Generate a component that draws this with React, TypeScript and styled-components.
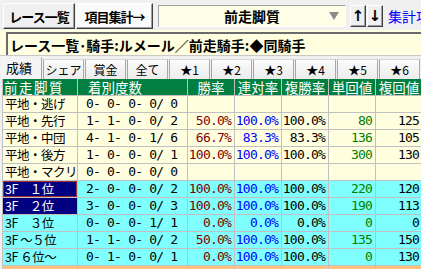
import React from 'react';
import styled, { createGlobalStyle } from 'styled-components';

const GlobalStyle = createGlobalStyle`
  html, body { margin: 0; padding: 0; background: #f0f0f0; }
  body {
    width: 421px;
    height: 269px;
    overflow: hidden;
    font-family: "Noto Sans CJK JP", sans-serif;
  }
`;

const Page = styled.div`
  width: 421px;
  height: 269px;
  overflow: hidden;
  background: #f0f0f0;
`;

const Toolbar = styled.div`
  display: flex;
  align-items: flex-start;
  height: 30px;
  padding: 3px 0 0 3px;
  box-sizing: border-box;
  white-space: nowrap;
  & > * { flex-shrink: 0; }
`;

const ToolButton = styled.div<{ $width: number; $light?: boolean }>`
  width: ${({ $width }) => $width}px;
  height: 26px;
  margin-right: 1px;
  box-sizing: border-box;
  display: flex;
  align-items: center;
  justify-content: center;
  background: ${({ $light }) => ($light ? '#fbfbfb' : '#f0f0f0')};
  border: 1px solid;
  border-color: #fff #404040 #404040 #fff;
  box-shadow: inset -1px -1px 0 #a0a0a0;
  font-size: 13px;
  font-weight: bold;
  letter-spacing: -1px;
  line-height: 1;
  color: #000;
`;

const Combo = styled.div`
  display: flex;
  align-items: center;
  width: 188px;
  height: 22px;
  margin: 2px 0 0 4px;
  box-sizing: border-box;
  background: #ffffe8;
  border: 1px solid;
  border-color: #a0a0a0 #fff #fff #a0a0a0;
`;

const ComboText = styled.span`
  flex: 1;
  text-align: center;
  padding-left: 20px;
  font-size: 14px;
  font-weight: bold;
  line-height: 1;
  color: #000;
`;

const ComboArrow = styled.span`
  width: 0;
  height: 0;
  margin: 0 6px 0 4px;
  border-left: 5px solid transparent;
  border-right: 5px solid transparent;
  border-top: 8px solid #8c8c8c;
`;

const ArrowButton = styled.div<{ $gap: number }>`
  width: 16px;
  height: 22px;
  margin: 2px 0 0 ${({ $gap }) => $gap}px;
  box-sizing: border-box;
  display: flex;
  align-items: center;
  justify-content: center;
  background: #f0f0f0;
  border: 1px solid;
  border-color: #fff #404040 #404040 #fff;
  box-shadow: inset -1px -1px 0 #a0a0a0;
  font-family: "DejaVu Sans", sans-serif;
  font-size: 15px;
  font-weight: bold;
  line-height: 1;
`;

const LinkText = styled.span`
  margin: 6px 0 0 5px;
  font-size: 14px;
  line-height: 1;
  color: #0000ff;
`;

const InfoBar = styled.div`
  height: 26px;
  padding: 2px 0 0 6px;
  box-sizing: border-box;
  background: #ffffe0;
  border-bottom: 1px solid #c8c8c8;
`;

const InfoBox = styled.div`
  height: 100%;
  box-sizing: border-box;
  padding: 2px 0 0 2px;
  border-top: 2px solid #6a6a6a;
  border-left: 2px solid #6a6a6a;
  font-size: 14px;
  font-weight: bold;
  line-height: 18px;
  color: #000;
  white-space: nowrap;
`;

const TabRow = styled.div`
  display: flex;
  align-items: flex-end;
  height: 23px;
  padding-left: 1px;
  gap: 1px;
`;

const Tab = styled.div<{ $active?: boolean }>`
  width: 41px;
  flex-shrink: 0;
  height: ${({ $active }) => ($active ? 22 : 20)}px;
  box-sizing: border-box;
  display: flex;
  align-items: ${({ $active }) => ($active ? 'flex-start' : 'center')};
  justify-content: ${({ $active }) => ($active ? 'flex-start' : 'center')};
  padding-left: ${({ $active }) => ($active ? 4 : 0)}px;
  padding-top: ${({ $active }) => ($active ? 2 : 1)}px;
  background: ${({ $active }) => ($active ? '#f4f4f4' : 'linear-gradient(#fbfbfb, #ececec)')};
  border-left: 1px solid ${({ $active }) => ($active ? '#f4f4f4' : '#a8a8a8')};
  border-right: 1px solid #a8a8a8;
  border-top: 1px solid ${({ $active }) => ($active ? '#f4f4f4' : '#d8d8d8')};
  font-size: ${({ $active }) => ($active ? 13 : 12)}px;
  line-height: 16px;
  color: #000;
  white-space: nowrap;
`;

const Grid = styled.div`
  display: grid;
  grid-template-columns: 75px 110px repeat(5, 47px);
  grid-auto-rows: 17px;
  margin-left: 2px;
  border-left: 1px solid #c0c0c0;
`;

const HeadCell = styled.div<{ $pad?: number; $spacing?: number; $left?: boolean }>`
  box-sizing: border-box;
  background: #007f40;
  color: #fff;
  border-right: 1px solid #c0c0c0;
  border-bottom: 1px solid #c0c0c0;
  padding-left: ${({ $pad }) => $pad ?? 0}px;
  text-align: ${({ $left }) => ($left ? 'left' : 'center')};
  font-size: 13.5px;
  letter-spacing: ${({ $spacing }) => $spacing ?? 0}px;
  line-height: 16px;
  white-space: nowrap;
`;

const LabelCell = styled.div<{ $bg: string; $selected?: boolean; $focus?: boolean }>`
  box-sizing: border-box;
  background: ${({ $bg, $selected }) => ($selected ? '#000080' : $bg)};
  color: ${({ $selected }) => ($selected ? '#fff' : '#000')};
  border-right: 1px solid #c0c0c0;
  border-bottom: 1px solid #c0c0c0;
  box-shadow: ${({ $focus }) => ($focus ? 'inset 0 0 0 1px #a03030' : 'none')};
  padding-left: 2px;
  font-size: 12.5px;
  letter-spacing: -0.5px;
  line-height: 16px;
  white-space: pre;
`;

const NumCell = styled.div<{ $bg: string; $color?: string; $left?: boolean }>`
  box-sizing: border-box;
  background: ${({ $bg }) => $bg};
  color: ${({ $color }) => $color ?? '#000'};
  border-right: 1px solid #c0c0c0;
  border-bottom: 1px solid #c0c0c0;
  padding: ${({ $left }) => ($left ? '0 0 0 8px' : '0 3px 0 0')};
  text-align: ${({ $left }) => ($left ? 'left' : 'right')};
  font-family: "DejaVu Sans Mono", monospace;
  font-size: 13px;
  letter-spacing: -0.8px;
  line-height: 16px;
  white-space: pre;
`;

type Row = {
  label: string;
  counts: string;
  values: string[];
  selected?: boolean;
  focus?: boolean;
};

const YELLOW = '#ffffe0';
const CYAN = '#80ffff';
const ORANGE = '#ffc080';

const valueColors = ['#800000', '#0000ff', '#000', '#008000', '#000'];

const flatRows: Row[] = [
  { label: '平地・逃げ', counts: '0- 0- 0- 0/ 0', values: ['', '', '', '', ''] },
  { label: '平地・先行', counts: '1- 1- 0- 0/ 2', values: ['50.0%', '100.0%', '100.0%', '80', '125'] },
  { label: '平地・中団', counts: '4- 1- 0- 1/ 6', values: ['66.7%', '83.3%', '83.3%', '136', '105'] },
  { label: '平地・後方', counts: '1- 0- 0- 0/ 1', values: ['100.0%', '100.0%', '100.0%', '300', '130'] },
  { label: '平地・マクリ', counts: '0- 0- 0- 0/ 0', values: ['', '', '', '', ''] },
];

const lastRows: Row[] = [
  { label: '3F　１位', counts: '2- 0- 0- 0/ 2', values: ['100.0%', '100.0%', '100.0%', '220', '120'], selected: true, focus: true },
  { label: '3F　２位', counts: '3- 0- 0- 0/ 3', values: ['100.0%', '100.0%', '100.0%', '190', '113'], selected: true },
  { label: '3F　３位', counts: '0- 0- 0- 1/ 1', values: ['0.0%', '0.0%', '0.0%', '0', '0'] },
  { label: '3F ～５位', counts: '1- 1- 0- 0/ 2', values: ['50.0%', '100.0%', '100.0%', '135', '150'] },
  { label: '3F ６位～', counts: '0- 1- 0- 0/ 1', values: ['0.0%', '100.0%', '100.0%', '0', '130'] },
];

const tabs = ['成績', 'シェア', '賞金', '全て', '★1', '★2', '★3', '★4', '★5', '★6'];
const heads = ['勝率', '連対率', '複勝率', '単回値', '複回値'];

const renderRow = (row: Row, bg: string) => (
  <React.Fragment key={row.label}>
    <LabelCell $bg={bg} $selected={row.selected} $focus={row.focus}>{row.label}</LabelCell>
    <NumCell $bg={bg} $left>{row.counts}</NumCell>
    {row.values.map((v, i) => (
      <NumCell key={i} $bg={bg} $color={valueColors[i]}>{v}</NumCell>
    ))}
  </React.Fragment>
);

const App: React.FC = () => (
  <Page>
    <GlobalStyle />
    <Toolbar>
      <ToolButton $width={72}>レース一覧</ToolButton>
      <ToolButton $width={77} $light>項目集計→</ToolButton>
      <Combo>
        <ComboText>前走脚質</ComboText>
        <ComboArrow />
      </Combo>
      <ArrowButton $gap={4}>↑</ArrowButton>
      <ArrowButton $gap={1}>↓</ArrowButton>
      <LinkText>集計項目</LinkText>
    </Toolbar>

    <InfoBar>
      <InfoBox>レース一覧･騎手:ルメール／前走騎手:◆同騎手</InfoBox>
    </InfoBar>

    <TabRow>
      {tabs.map((t, i) => (
        <Tab key={t} $active={i === 0}>{t}</Tab>
      ))}
    </TabRow>

    <Grid>
      <HeadCell $left $pad={1} $spacing={1.5}>前走脚質</HeadCell>
      <HeadCell $left $pad={10}>着別度数</HeadCell>
      {heads.map(h => (
        <HeadCell key={h}>{h}</HeadCell>
      ))}
      {flatRows.map(r => renderRow(r, YELLOW))}
      {lastRows.map(r => renderRow(r, CYAN))}
      {Array.from({ length: 7 }).map((_, i) => (
        <NumCell key={`o${i}`} $bg={ORANGE} />
      ))}
    </Grid>
  </Page>
);

export default App;
